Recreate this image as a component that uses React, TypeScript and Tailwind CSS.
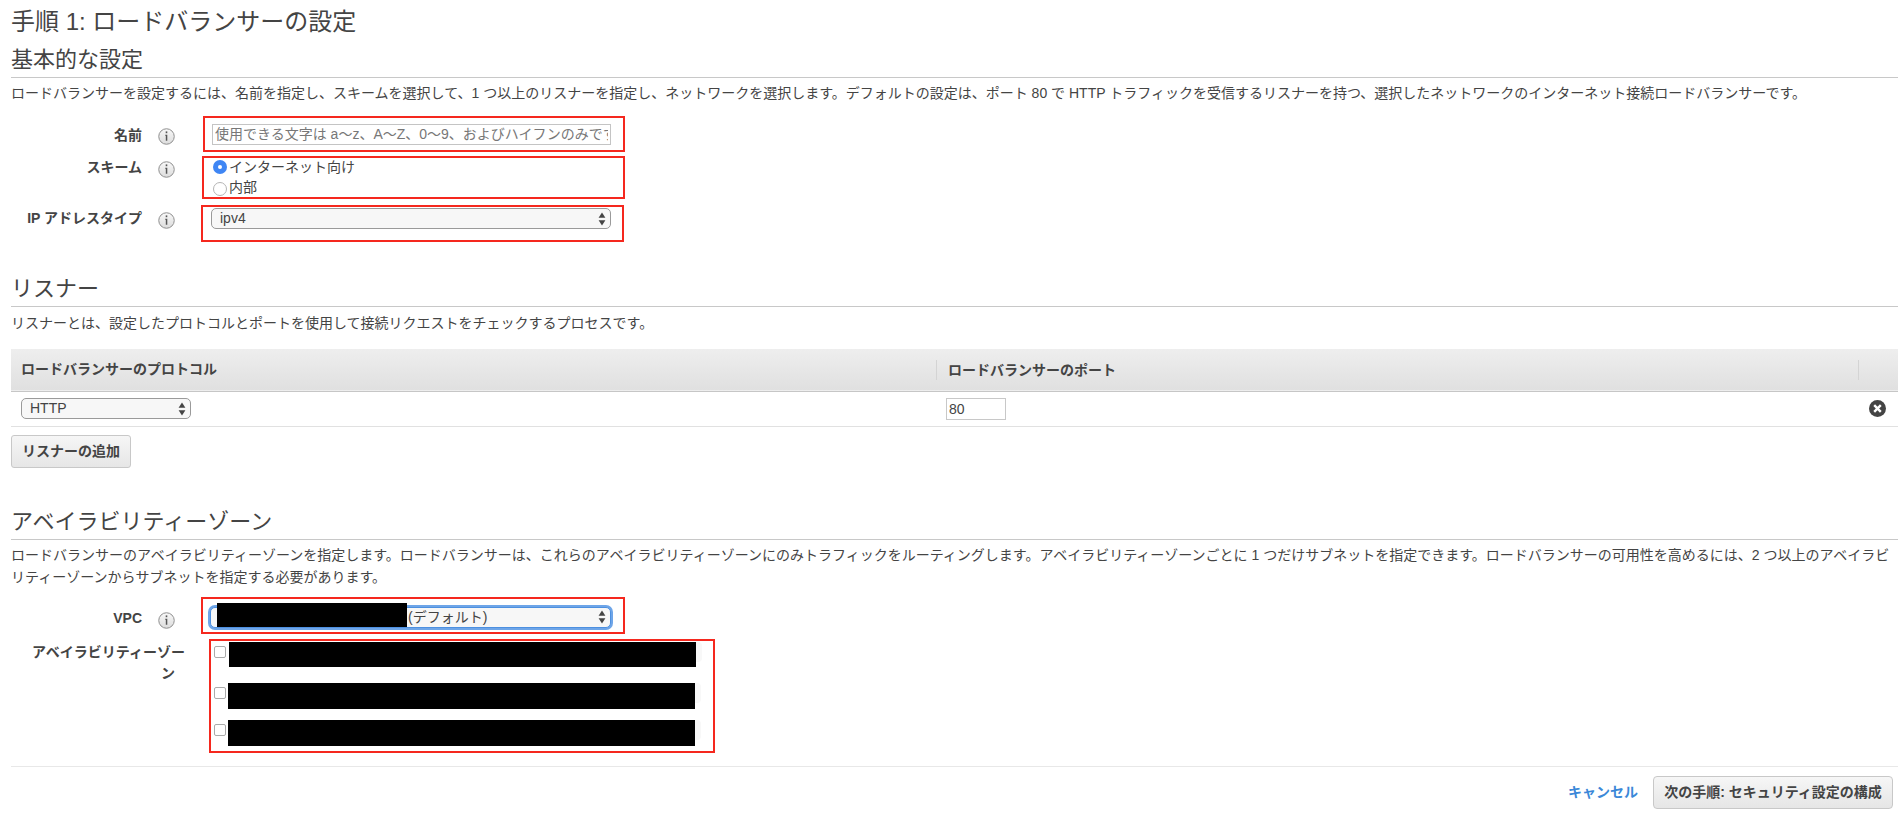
import React from "react";

function InfoIcon({ className = "" }: { className?: string }) {
  return (
    <svg width="17" height="17" viewBox="0 0 17 17" className={`shrink-0 ${className}`}>
      <defs>
        <linearGradient id="infoBg" x1="0" y1="0" x2="0" y2="1">
          <stop offset="0" stopColor="#f8f8f8" />
          <stop offset="1" stopColor="#dcdcdc" />
        </linearGradient>
      </defs>
      <circle cx="8.5" cy="8.5" r="7.75" fill="url(#infoBg)" stroke="#8f8f8f" strokeWidth="1" />
      <rect x="7.7" y="3.4" width="1.6" height="1.8" fill="#555" />
      <path d="M7.2 6.7h2.1v6h-1.5v-5h-0.6z" fill="#555" />
    </svg>
  );
}

function SelectArrows() {
  return (
    <svg width="8" height="14" viewBox="0 0 8 14" className="absolute right-[5px] top-1/2 -translate-y-1/2 pointer-events-none">
      <path d="M4 0.5 L7.4 5.8 H0.6 Z" fill="#444" />
      <path d="M4 13.5 L7.4 8.2 H0.6 Z" fill="#444" />
    </svg>
  );
}

function Select({ value, width, focused = false, pad = "pl-[8px]" }: { value: string; width: string; focused?: boolean; pad?: string }) {
  return (
    <div className={`relative ${width}`}>
      <select
        defaultValue={value}
        className={`appearance-none w-full h-[21px] rounded-[5px] bg-[#f7f7f7] border text-[14px] leading-[19px] text-[#444] ${pad} outline-none ${
          focused ? "border-[#4d90e0] shadow-[0_0_0_2px_#6ea5e8]" : "border-[#9a9a9a]"
        }`}
      >
        <option value={value}>{value}</option>
      </select>
      <SelectArrows />
    </div>
  );
}

function SectionHeading({ children, className = "" }: { children: React.ReactNode; className?: string }) {
  return (
    <h2 className={`text-[22px] leading-[30px] font-normal text-[#444] border-b border-[#c8c8c8] pb-[2px] ${className}`}>
      {children}
    </h2>
  );
}

function AzRow({ top, boxClass }: { top: string; boxClass: string }) {
  return (
    <div className={`flex items-start ${top}`}>
      <input
        type="checkbox"
        readOnly
        className="appearance-none w-[12px] h-[12px] mt-[4px] rounded-[2px] border border-[#ababab] bg-white shrink-0"
      />
      <div className={`bg-black w-[467px] ${boxClass}`} />
      <div className="w-[6px] h-[20px] bg-[#f8f8f8] rounded-r-[4px]" />
    </div>
  );
}

export default function App() {
  return (
    <div className="min-h-[818px] bg-white pl-[11px] pr-[5px] text-[14px] text-[#444] font-['Liberation_Sans','Noto_Sans_CJK_JP',sans-serif]">
      <h1 className="text-[24px] leading-[30px] font-normal pt-[7px]">手順 1: ロードバランサーの設定</h1>

      <SectionHeading className="mt-[8px]">基本的な設定</SectionHeading>
      <p className="leading-[20px] mt-[5px]">
        ロードバランサーを設定するには、名前を指定し、スキームを選択して、1 つ以上のリスナーを指定し、ネットワークを選択します。デフォルトの設定は、ポート 80 で HTTP トラフィックを受信するリスナーを持つ、選択したネットワークのインターネット接続ロードバランサーです。
      </p>

      <div className="flex items-start mt-[13px]">
        <label className="w-[131px] text-right font-bold leading-[20px] mt-[9px]">名前</label>
        <InfoIcon className="ml-[16px] mt-[12px]" />
        <div className="ml-[28px] w-[422px] h-[36px] border-2 border-[#f5281e] pt-[6px] pl-[7px]">
          <input
            placeholder="使用できる文字は a〜z、A〜Z、0〜9、およびハイフンのみです"
            className="w-[399px] h-[21px] border border-[#c4c4c4] px-[2px] text-[14px] placeholder:text-[#777] outline-none"
          />
        </div>
      </div>

      <div className="flex items-start mt-[4px]">
        <label className="w-[131px] text-right font-bold leading-[20px] mt-[1px]">スキーム</label>
        <InfoIcon className="ml-[16px] mt-[5px]" />
        <div className="ml-[27px] w-[423px] h-[43px] border-2 border-[#f5281e] pl-[9px]">
          <div className="flex items-center h-[20px] -mt-[1px]">
            <span className="w-[14px] h-[14px] rounded-full bg-[#3f86f4] flex items-center justify-center shrink-0">
              <span className="w-[4px] h-[4px] rounded-full bg-white" />
            </span>
            <span className="ml-[2px] leading-[20px]">インターネット向け</span>
          </div>
          <div className="flex items-start h-[20px]">
            <span className="w-[14px] h-[14px] mt-[5px] rounded-full border border-[#b5b5b5] bg-white shrink-0" />
            <span className="ml-[2px] leading-[20px]">内部</span>
          </div>
        </div>
      </div>

      <div className="flex items-start mt-[6px]">
        <label className="w-[131px] text-right font-bold leading-[20px] mt-[3px]">IP アドレスタイプ</label>
        <InfoIcon className="ml-[16px] mt-[7px]" />
        <div className="ml-[26px] w-[423px] h-[37px] border-2 border-[#f5281e] pt-[1px] pl-[8px]">
          <Select value="ipv4" width="w-[400px]" />
        </div>
      </div>

      <SectionHeading className="mt-[32px]">リスナー</SectionHeading>
      <p className="leading-[20px] mt-[6px]">リスナーとは、設定したプロトコルとポートを使用して接続リクエストをチェックするプロセスです。</p>

      <table className="w-full mt-[16px] border-collapse table-fixed">
        <thead>
          <tr className="h-[42px] bg-gradient-to-b from-[#eeeeee] to-[#e0e0e0] border-b border-[#c6c6c6]">
            <th className="w-[925px] text-left font-bold pl-[10px] p-0">ロードバランサーのプロトコル</th>
            <th className="text-left font-bold p-0">
              <div className="border-l border-[#d4d4d4] h-[20px] pl-[11px] leading-[20px]">ロードバランサーのポート</div>
            </th>
            <th className="w-[40px] p-0">
              <div className="border-l border-[#d4d4d4] h-[20px]" />
            </th>
          </tr>
        </thead>
        <tbody>
          <tr className="h-[35px] border-b border-[#e1e1e1]">
            <td className="pl-[10px] p-0">
              <Select value="HTTP" width="w-[170px]" />
            </td>
            <td className="p-0 pl-[10px]">
              <input defaultValue="80" className="w-[60px] h-[22px] border border-[#c8c8c8] px-[2px] text-[14px] text-[#444] outline-none" />
            </td>
            <td className="p-0 text-center">
              <svg width="17" height="17" viewBox="0 0 17 17" className="ml-[11px]">
                <circle cx="8.5" cy="8.5" r="8.5" fill="#444" />
                <path d="M5.2 5.2 L11.8 11.8 M11.8 5.2 L5.2 11.8" stroke="#fff" strokeWidth="2.4" />
              </svg>
            </td>
          </tr>
        </tbody>
      </table>

      <button className="block mt-[8px] w-[120px] h-[33px] rounded-[3px] border border-[#c8c8c8] bg-gradient-to-b from-[#f6f6f6] to-[#e6e6e6] font-bold text-[#444]">
        リスナーの追加
      </button>

      <SectionHeading className="mt-[39px]">アベイラビリティーゾーン</SectionHeading>
      <p className="leading-[22px] mt-[4px]">
        ロードバランサーのアベイラビリティーゾーンを指定します。ロードバランサーは、これらのアベイラビリティーゾーンにのみトラフィックをルーティングします。アベイラビリティーゾーンごとに 1 つだけサブネットを指定できます。ロードバランサーの可用性を高めるには、2 つ以上のアベイラビリティーゾーンからサブネットを指定する必要があります。
      </p>

      <div className="flex items-start mt-[9px]">
        <label className="w-[131px] text-right font-bold leading-[20px] mt-[11px]">VPC</label>
        <InfoIcon className="ml-[16px] mt-[15px]" />
        <div className="ml-[26px] w-[424px] h-[37px] border-2 border-[#f5281e] pt-[8px] pl-[7px] relative">
          <Select value="(デフォルト)" width="w-[401px]" focused pad="pl-[197px]" />
          <div className="absolute left-[14px] top-[4px] w-[190px] h-[24px] bg-black" />
        </div>
      </div>

      <div className="flex items-start mt-[5px]">
        <label className="w-[164px] text-right font-bold leading-[21px] mt-[3px]">
          <span className="block -mr-[10px] whitespace-nowrap">アベイラビリティーゾー</span>
          <span className="block">ン</span>
        </label>
        <div className="ml-[34px] w-[506px] h-[114px] border-2 border-[#f5281e] pl-[3px] pt-[1px]">
          <AzRow top="" boxClass="h-[25px] ml-[3px]" />
          <AzRow top="mt-[16px]" boxClass="h-[26px] ml-[2px]" />
          <AzRow top="mt-[11px]" boxClass="h-[26px] ml-[2px]" />
        </div>
      </div>

      <div className="border-t border-[#e8e8e8] mt-[13px] flex items-center justify-end h-[43px] pt-[10px] pr-[5px]">
        <a className="font-bold text-[#3b88d8] mr-[15px]">キャンセル</a>
        <button className="w-[240px] h-[33px] rounded-[4px] border border-[#c8c8c8] bg-gradient-to-b from-[#f6f6f6] to-[#e6e6e6] font-bold text-[#444]">
          次の手順: セキュリティ設定の構成
        </button>
      </div>
    </div>
  );
}
